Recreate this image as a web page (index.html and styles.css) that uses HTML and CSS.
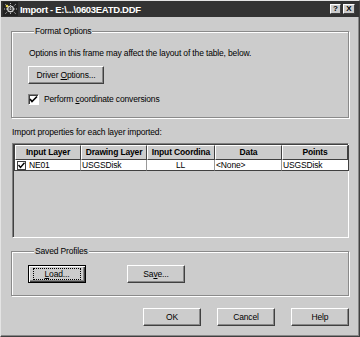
FILE: index.html
```html
<!DOCTYPE html>
<html lang="en">
<head>
    <meta charset="UTF-8">
    <title>Import</title>
    <link rel="stylesheet" href="styles.css">
</head>
<body>
    <div class="window">
        <div class="titlebar">
            <svg class="app-icon" width="15" height="14" viewBox="0 0 15 14">
                <rect x="0" y="0" width="15" height="14" fill="#222"/>
                <path d="M2 2 L13 12 M13 2 L2 12 M7.5 1 L7.5 13 M1 7 L14 7" stroke="#bbb" stroke-width="1" stroke-dasharray="1 1"/>
                <circle cx="7.5" cy="7" r="3" fill="none" stroke="#eee" stroke-width="1"/>
                <circle cx="4" cy="4" r="1.3" fill="#e8d44a"/>
            </svg>
            <span class="title">Import - E:\...\0603EATD.DDF</span>
            <div class="caption-btns">
                <span class="cap-btn">?</span>
                <span class="cap-btn close">X</span>
            </div>
        </div>

        <div class="content">
            <fieldset class="group format">
                <legend>Format Options</legend>
                <p class="note">Options in this frame may affect the layout of the table, below.</p>
                <button class="btn driver">Driver <u>O</u>ptions...</button>
                <label class="check">
                    <span class="box">
                        <svg width="9" height="9" viewBox="0 0 9 9"><path d="M1 4 L3 6.5 L8 1.5" fill="none" stroke="#000" stroke-width="1.6"/></svg>
                    </span>
                    <span>Perform <u>c</u>oordinate conversions</span>
                </label>
            </fieldset>

            <p class="caption">Import properties for each layer imported:</p>

            <div class="grid-box">
                <div class="grid">
                    <div class="head">Input Layer</div>
                    <div class="head">Drawing Layer</div>
                    <div class="head">Input Coordina</div>
                    <div class="head">Data</div>
                    <div class="head">Points</div>

                    <div class="cell first">
                        <span class="mini-box">
                            <svg width="7" height="7" viewBox="0 0 7 7"><path d="M0.5 3 L2.5 5.5 L6.5 0.8" fill="none" stroke="#000" stroke-width="1.4"/></svg>
                        </span><span>NE01</span>
                    </div>
                    <div class="cell">USGSDisk</div>
                    <div class="cell center">LL</div>
                    <div class="cell">&lt;None&gt;</div>
                    <div class="cell">USGSDisk</div>
                </div>
            </div>

            <fieldset class="group profiles">
                <legend>Saved Profiles</legend>
                <div class="profile-btns">
                    <button class="btn default"><span class="focus"><u>L</u>oad...</span></button>
                    <button class="btn">Sa<u>v</u>e...</button>
                </div>
            </fieldset>

            <div class="actions">
                <button class="btn">OK</button>
                <button class="btn">Cancel</button>
                <button class="btn">Help</button>
            </div>
        </div>
    </div>
</body>
</html>
```

FILE: styles.css
```css
body {
    margin: 0;
    background: #ccc;
    font-family: "Liberation Sans", Arial, sans-serif;
    font-size: 8.5px;
    letter-spacing: -0.15px;
    color: #000;
}
.window {
    width: 360px;
    height: 337px;
    box-sizing: border-box;
    background: #ccc;
    border: 1px solid;
    border-color: #e4e4e4 #404040 #404040 #e4e4e4;
    box-shadow: inset -1px -1px 0 #888;
}
.titlebar {
    height: 16px;
    background: #333;
    display: flex;
    align-items: center;
    padding-left: 2px;
}
.app-icon {
    flex: none;
}
.title {
    color: #fff;
    font-weight: bold;
    font-size: 9.5px;
    margin-left: 2px;
    letter-spacing: -0.3px;
}
.caption-btns {
    margin-left: auto;
    margin-right: 4px;
    display: flex;
    gap: 2px;
}
.cap-btn {
    width: 11px;
    height: 10px;
    box-sizing: border-box;
    background: #ccc;
    border: 1px solid;
    border-color: #fff #404040 #404040 #fff;
    font-weight: bold;
    font-size: 8px;
    line-height: 8px;
    letter-spacing: 0;
    text-align: center;
}
.cap-btn.close {
    width: 12px;
}
.content {
    padding: 9px 10px 0 10px;
}
.group {
    margin: 0;
    padding: 0;
    min-width: 0;
    border: 1px solid #8a8a8a;
    box-shadow: inset 1px 1px 0 #fff, 1px 1px 0 #fff;
}
.group legend {
    margin-left: 6px;
    padding: 0 1px;
    line-height: 11px;
    background: #ccc;
}
.format {
    padding: 0 0 12px 16px;
}
.note {
    margin: 11px 0 0 1px;
    line-height: 11px;
}
.btn {
    display: block;
    height: 18px;
    padding: 0;
    box-sizing: border-box;
    background: #ccc;
    border: 1px solid;
    border-color: #fff #404040 #404040 #fff;
    box-shadow: inset -1px -1px 0 #888;
    font-family: inherit;
    font-size: 8.5px;
    letter-spacing: inherit;
    color: #000;
}
.driver {
    width: 76px;
    margin-top: 7px;
}
.check {
    display: flex;
    align-items: center;
    gap: 5px;
    margin-top: 10px;
    line-height: 11px;
}
.box {
    width: 11px;
    height: 11px;
    box-sizing: border-box;
    background: #fff;
    border: 1px solid;
    border-color: #808080 #fff #fff #808080;
    box-shadow: inset 1px 1px 0 #404040;
    display: flex;
    align-items: center;
    justify-content: center;
}
.caption {
    margin: 9px 0 0 1px;
    line-height: 11px;
}
.grid-box {
    margin: 5px 0 0 1px;
    height: 95px;
    box-sizing: border-box;
    border: 1px solid;
    border-color: #808080 #fff #fff #808080;
    box-shadow: inset 1px 1px 0 #404040;
    padding: 1px 0 0 1px;
}
.grid {
    display: grid;
    grid-template-columns: 66px 66px 68px 67px 66px;
    width: max-content;
    border-left: 1px solid #404040;
    border-right: 1px solid #404040;
}
.head {
    height: 15px;
    box-sizing: border-box;
    background: #ccc;
    border: 1px solid;
    border-color: #fff #404040 #404040 #fff;
    font-weight: bold;
    text-align: center;
    line-height: 13px;
}
.cell {
    height: 11px;
    box-sizing: border-box;
    background: #fff;
    border-right: 1px solid #999;
    border-bottom: 1px solid #404040;
    line-height: 10px;
    padding-left: 1px;
    display: flex;
    align-items: center;
}
.cell:last-child {
    border-right: none;
}
.cell.center {
    justify-content: center;
    padding-left: 0;
}
.cell.first {
    padding-left: 2px;
}
.mini-box {
    width: 9px;
    height: 9px;
    box-sizing: border-box;
    border: 1px solid #404040;
    margin-right: 3px;
    display: flex;
    align-items: center;
    justify-content: center;
}
.profiles {
    margin-top: 8px;
    padding: 8px 0 12px 16px;
}
.profile-btns {
    display: flex;
    gap: 41px;
}
.profile-btns .btn {
    width: 58px;
}
.btn.default {
    border: 1px solid #000;
    box-shadow: inset 1px 1px 0 #fff, inset -1px -1px 0 #404040, inset -2px -2px 0 #888;
    display: flex;
    align-items: center;
    justify-content: center;
}
.focus {
    width: 46px;
    height: 10px;
    line-height: 10px;
    border: 1px dotted #000;
}
.actions {
    display: flex;
    justify-content: flex-end;
    gap: 16px;
    margin-top: 12px;
}
.actions .btn {
    width: 58px;
}
```
